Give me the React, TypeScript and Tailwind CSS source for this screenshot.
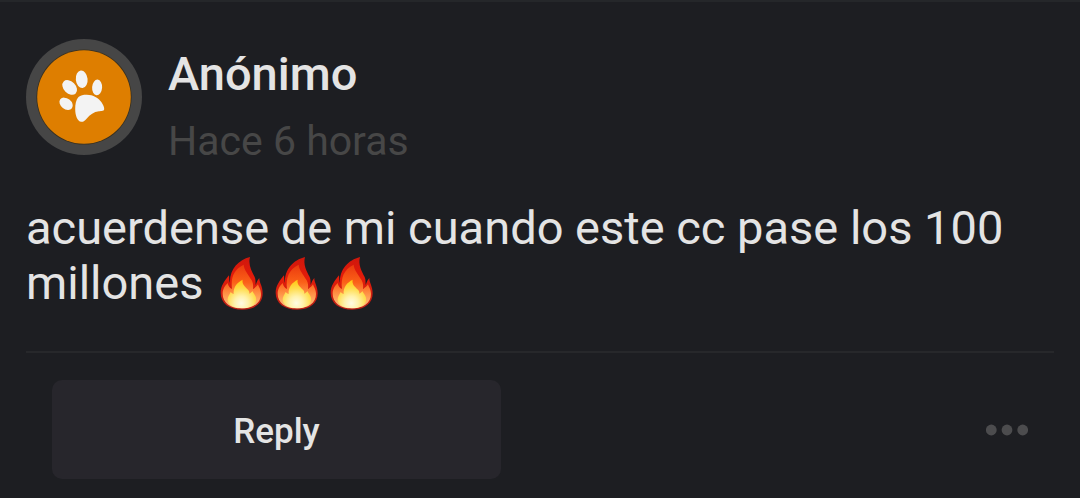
import { useId } from "react";

type Comment = {
  author: string;
  time: string;
  text: string;
  flames: number;
};

const comment: Comment = {
  author: "Anónimo",
  time: "Hace 6 horas",
  text: "acuerdense de mi cuando este cc pase los 100 millones",
  flames: 3,
};

function PawAvatar() {
  return (
    <svg viewBox="0 0 116 116" className="size-[116px] shrink-0" role="img" aria-label="Avatar">
      <circle cx="58" cy="58" r="58" fill="#464646" />
      <circle cx="58" cy="58" r="47.6" fill="#38301f" />
      <circle cx="58" cy="58" r="46.8" fill="#de7e00" />
      <g fill="#f3f3f3">
        <ellipse cx="55.7" cy="40.3" rx="5.9" ry="8.8" transform="rotate(-6 55.7 40.3)" />
        <ellipse cx="43.7" cy="48.4" rx="6" ry="8.5" transform="rotate(-45 43.7 48.4)" />
        <ellipse cx="71.1" cy="48.4" rx="5" ry="7.8" transform="rotate(4 71.1 48.4)" />
        <ellipse cx="40.1" cy="64.8" rx="7.4" ry="5.3" transform="rotate(38 40.1 64.8)" />
        <path d="M60.5 55.7C67 55.6 72.5 58.8 75.5 63.2C77.2 65.8 78.4 68.4 78.2 70.3C78 72.2 75.6 72 73 72.3C67.6 73 64.2 75.6 60.8 79.4C58.6 81.8 57.4 83 55.2 82.8C51.4 82.4 49.2 76.5 49.2 70C49.2 65.4 50 60.6 52.5 58C54.4 56.1 57.4 55.7 60.5 55.7Z" />
      </g>
    </svg>
  );
}

function Flame() {
  const id = useId();

  return (
    <svg
      viewBox="-2 14 165 165"
      className="inline-block size-[55px] align-top"
      role="img"
      aria-label="fuego"
    >
      <defs>
        <linearGradient id={`${id}-outer`} x1="0" y1="0" x2="0" y2="1">
          <stop offset="0" stopColor="#cf170c" />
          <stop offset="0.4" stopColor="#e41c0a" />
          <stop offset="1" stopColor="#b81f16" />
        </linearGradient>
        <linearGradient id={`${id}-mid`} x1="0" y1="0" x2="0" y2="1">
          <stop offset="0" stopColor="#ea3a0e" />
          <stop offset="0.4" stopColor="#fb6018" />
          <stop offset="0.7" stopColor="#ff984c" />
          <stop offset="1" stopColor="#ffc684" />
        </linearGradient>
        <radialGradient id={`${id}-core`} cx="0.48" cy="0.82" r="0.8">
          <stop offset="0" stopColor="#fffbe4" />
          <stop offset="0.3" stopColor="#fff2ac" />
          <stop offset="0.65" stopColor="#ffdc4c" />
          <stop offset="1" stopColor="#ffc810" />
        </radialGradient>
      </defs>
      <path
        fill={`url(#${id}-outer)`}
        d="M103 20C97 42 107 62 117 80C121 89 119 98 120 104C123 96 126 88 131 83C130 96 141 107 141 129C141 158 119 178 80 178C40 178 15 158 15 127C15 107 27 91 40 75C41 84 40 91 43 98C41 57 68 29 103 20Z"
      />
      <path
        fill={`url(#${id}-mid)`}
        d="M84 43C85 59 99 74 108 90C113 99 113 108 112 117C119 111 124 107 127 102C129 111 136 116 136 131C136 158 113 174 79 174C44 174 21 157 21 130C21 115 29 105 36 98C38 107 41 112 49 116C45 82 54 58 84 43Z"
      />
      <path
        fill={`url(#${id}-core)`}
        d="M81 88C78 102 88 109 97 118C101 122 101 126 101 130C105 128 108 126 110 122C113 130 124 138 121 152C117 167 100 174 79 174C56 174 38 165 36 150C35 140 41 134 45 125C47 128 50 130 54 131C52 110 65 96 81 88Z"
      />
    </svg>
  );
}

export default function App() {
  return (
    <article className="min-h-screen border-t-2 border-[#25272a] bg-[#1d1e22] px-[26px] pt-[37px] pb-5 font-['Roboto',sans-serif] text-[#e4e4e4]">
      <header className="flex items-start gap-[26px]">
        <PawAvatar />
        <div className="pt-[3px]">
          <h2 className="text-[47px] leading-[64px] font-medium">{comment.author}</h2>
          <p className="text-[41px] leading-[70px] text-[#474747]">{comment.time}</p>
        </div>
      </header>

      <p className="mt-6 text-[47px] leading-[55px]">
        {comment.text}{" "}
        <span className="whitespace-nowrap">
          {Array.from({ length: comment.flames }, (_, i) => (
            <Flame key={i} />
          ))}
        </span>
      </p>

      <footer className="mt-[41px] flex items-center justify-between border-t-2 border-[#27282b] px-[26px] pt-[27px]">
        <button
          type="button"
          className="h-[99px] w-[46%] rounded-[10px] bg-[#27262c] pt-1.5 text-[35px] font-medium"
        >
          Reply
        </button>
        <button type="button" aria-label="Más opciones">
          <svg viewBox="0 0 42 12" className="h-3 w-[42px]" fill="#4c4c4e">
            <circle cx="5.3" cy="6" r="5.4" />
            <circle cx="21" cy="6" r="5.4" />
            <circle cx="36.7" cy="6" r="5.4" />
          </svg>
        </button>
      </footer>
    </article>
  );
}
